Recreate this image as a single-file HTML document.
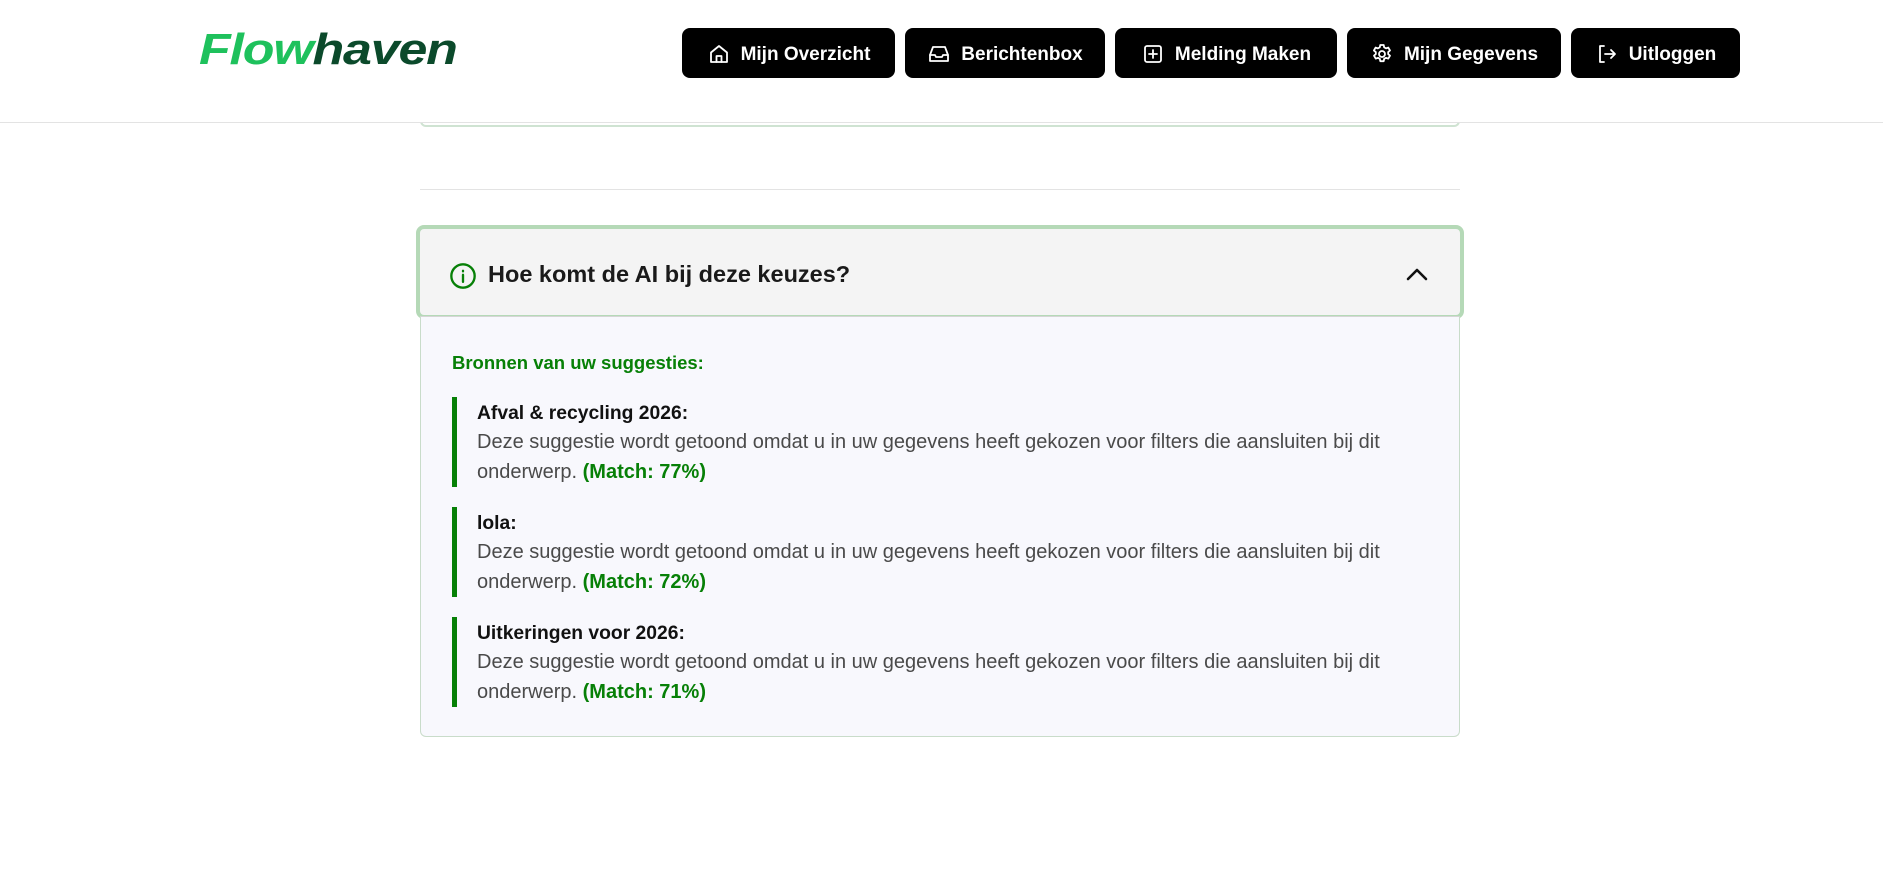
<!DOCTYPE html>
<html><head><meta charset="utf-8">
<style>
*{box-sizing:border-box;margin:0;padding:0}
body{width:1883px;height:895px;background:#fff;font-family:"Liberation Sans",sans-serif;position:relative;overflow:hidden}
.hdr{position:absolute;left:0;top:0;width:1883px;height:123px;border-bottom:1px solid #e3e3e3;background:#fff;z-index:2}
.logo{position:absolute;left:199px;top:25px;font-size:44px;font-weight:bold;font-style:italic;letter-spacing:-1px;transform:scaleX(1.18);transform-origin:left top}
.logo .a{color:#1ec15c}.logo .b{color:#0b4a2b}
.btn{position:absolute;top:28px;height:50px;background:#000;color:#fff;border-radius:8px;font-weight:bold;font-size:19px;display:flex;align-items:center;justify-content:center;gap:10px;padding-top:3px}
.btn svg{width:24px;height:24px;fill:none;stroke:#fff;stroke-width:1.8;stroke-linecap:round;stroke-linejoin:round;margin-top:-2px}
.topbox{position:absolute;left:420px;top:100px;width:1040px;height:27px;border:2px solid #cfe3d2;border-top:none;border-radius:0 0 6px 6px}
.sep{position:absolute;left:420px;top:189px;width:1040px;height:1px;background:#e3e3e3}
.acc{position:absolute;left:416px;top:225px;width:1048px;height:94px;border:4px solid #b5d9b7;border-radius:8px;background:#f4f4f4}
.acc h2{position:absolute;left:68px;top:32px;font-size:23.5px;color:#1a1a1a}
.cont{position:absolute;left:420px;top:316px;width:1040px;height:421px;background:#f8f8fd;border:1px solid #c9dcca;border-top:1px solid #d5d5d5;border-radius:0 0 6px 6px}
.bron{position:absolute;left:31px;top:35px;color:#078007;font-weight:bold;font-size:18.5px}
.item{position:absolute;left:31px;border-left:5px solid #078007;padding-left:20px;width:980px}
.item b.t{display:block;font-size:19.3px;color:#111;line-height:27px;margin-top:3px}
.item p{font-size:20px;color:#4a4a4a;line-height:30px}
.item p b{color:#078007}
</style></head><body>
<div class="hdr">
<div class="logo"><span class="a">Flow</span><span class="b">haven</span></div>
<div class="btn" style="left:682px;width:213px"><svg viewBox="0 0 24 24"><path d="M4 10.5L12 4l8 6.5V20H4z"/><path d="M9.5 20v-6h5v6"/></svg>Mijn Overzicht</div>
<div class="btn" style="left:905px;width:200px"><svg viewBox="0 0 24 24"><path d="M3 13l3-8h12l3 8v6H3z"/><path d="M3 13h5l1 2h6l1-2h5"/></svg>Berichtenbox</div>
<div class="btn" style="left:1115px;width:222px"><svg viewBox="0 0 24 24"><rect x="4" y="4" width="16" height="16" rx="2"/><path d="M12 8v8M8 12h8"/></svg>Melding Maken</div>
<div class="btn" style="left:1347px;width:214px"><svg viewBox="0 0 24 24"><circle cx="12" cy="12" r="3"/><path d="M10.3 3h3.4l.5 2.4 1.8 1 2.3-.8 1.7 2.9-1.8 1.6v2l1.8 1.6-1.7 2.9-2.3-.8-1.8 1-.5 2.4h-3.4l-.5-2.4-1.8-1-2.3.8-1.7-2.9 1.8-1.6v-2L3.9 8.5l1.7-2.9 2.3.8 1.8-1z"/></svg>Mijn Gegevens</div>
<div class="btn" style="left:1571px;width:169px"><svg viewBox="0 0 24 24"><path d="M9 4H5v16h4"/><path d="M10 12h10M16 8l4 4-4 4"/></svg>Uitloggen</div>
</div>
<div class="topbox"></div>
<div class="sep"></div>
<div class="acc">
<svg style="position:absolute;left:29px;top:33px" width="28" height="28" viewBox="0 0 24 24" fill="none" stroke="#078007" stroke-width="2" stroke-linecap="round"><circle cx="12" cy="12" r="10"/><path d="M12 11v6M12 7.5v.5"/></svg>
<h2>Hoe komt de AI bij deze keuzes?</h2>
<svg style="position:absolute;left:985px;top:37px" width="24" height="16" viewBox="0 0 24 16" fill="none" stroke="#111" stroke-width="2.6" stroke-linecap="round" stroke-linejoin="round"><path d="M3 13l9-9 9 9"/></svg>
</div>
<div class="cont">
<div class="bron">Bronnen van uw suggesties:</div>
<div class="item" style="top:80px"><b class="t">Afval &amp; recycling 2026:</b><p>Deze suggestie wordt getoond omdat u in uw gegevens heeft gekozen voor filters die aansluiten bij dit onderwerp. <b>(Match: 77%)</b></p></div>
<div class="item" style="top:190px"><b class="t">lola:</b><p>Deze suggestie wordt getoond omdat u in uw gegevens heeft gekozen voor filters die aansluiten bij dit onderwerp. <b>(Match: 72%)</b></p></div>
<div class="item" style="top:300px"><b class="t">Uitkeringen voor 2026:</b><p>Deze suggestie wordt getoond omdat u in uw gegevens heeft gekozen voor filters die aansluiten bij dit onderwerp. <b>(Match: 71%)</b></p></div>
</div>
</body></html>
